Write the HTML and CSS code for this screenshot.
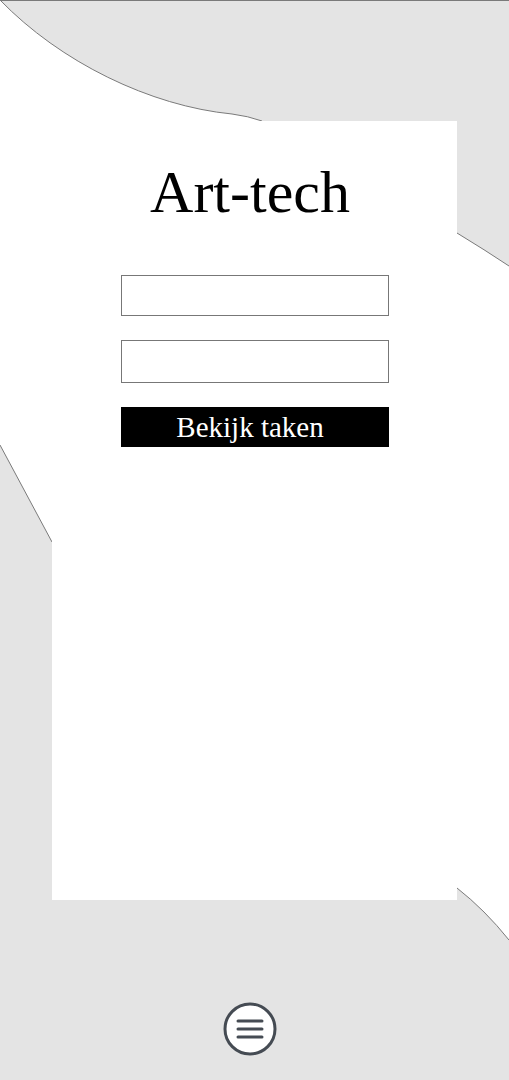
FILE: index.html
```html
<!DOCTYPE html>
<html lang="nl">
<head>
  <meta charset="UTF-8" />
  <meta name="viewport" content="width=device-width, initial-scale=1.0"/>
  <title>Art-tech</title>
  <link rel="stylesheet" href="styles.css">
</head>
<body>
  <svg class="backdrop" width="509" height="1080" viewBox="0 0 509 1080">
    <path class="blob" d="M0,0 C60,62 150,106 232,114 Q248,116 262,121 L300,135 L457,233 Q485,250 509,266 L509,940 Q485,910 457,888 L52,542 L0,445 Z"/>
    <path class="edge" d="M0,0 C60,62 150,106 232,114 Q248,116 262,121"/>
    <path class="edge" d="M457,233 Q485,250 509,266"/>
    <path class="edge" d="M509,940 Q485,910 457,888"/>
    <path class="edge" d="M52,542 L0,445"/>
    <line class="edge" x1="0" y1="0.5" x2="509" y2="0.5"/>
  </svg>

  <main class="page">
    <section class="card">
      <h1 class="title">Art-tech</h1>
      <form class="login">
        <input class="field" type="text" />
        <input class="field field-tall" type="password" />
        <button class="submit" type="button">Bekijk taken</button>
      </form>
    </section>
  </main>

  <nav class="menu">
    <button class="menu-btn" type="button" aria-label="Menu">
      <svg width="54" height="54" viewBox="0 0 54 54">
        <circle cx="27" cy="27" r="25" fill="#fff" stroke="#454b53" stroke-width="3"/>
        <line x1="15" y1="19" x2="39" y2="19" stroke="#454b53" stroke-width="3" stroke-linecap="round"/>
        <line x1="15" y1="27" x2="39" y2="27" stroke="#454b53" stroke-width="3" stroke-linecap="round"/>
        <line x1="15" y1="35" x2="39" y2="35" stroke="#454b53" stroke-width="3" stroke-linecap="round"/>
      </svg>
    </button>
  </nav>
</body>
</html>
```

FILE: styles.css
```css
* {
  box-sizing: border-box;
  margin: 0;
  padding: 0;
}

body {
  font-family: 'Liberation Serif', 'DejaVu Serif', serif;
  background: #e4e4e4;
  width: 509px;
  height: 1080px;
  position: relative;
  overflow: hidden;
}

.backdrop {
  position: absolute;
  top: 0;
  left: 0;
  z-index: 0;
}

.blob {
  fill: #fff;
}

.edge {
  fill: none;
  stroke: #7a7a7a;
  stroke-width: 1;
}

.page {
  position: relative;
  z-index: 1;
  padding-top: 121px;
  padding-left: 52px;
}

.card {
  width: 405px;
  height: 779px;
  background: #fff;
  padding-top: 36px;
  display: flex;
  flex-direction: column;
  align-items: center;
}

.title {
  font-weight: normal;
  font-size: 60px;
  line-height: 70px;
  margin-left: -9px;
  color: #000;
}

.login {
  margin-top: 48px;
  display: flex;
  flex-direction: column;
  gap: 24px;
  width: 268px;
}

.field {
  height: 41px;
  border: 1px solid #777;
  background: #fff;
  font-family: inherit;
  font-size: 18px;
  padding: 0 8px;
}

.field-tall {
  height: 43px;
}

.submit {
  height: 40px;
  background: #000;
  color: #fff;
  border: none;
  font-family: inherit;
  font-size: 29px;
  line-height: 40px;
  padding-right: 9px;
}

.menu {
  position: relative;
  z-index: 1;
  display: flex;
  justify-content: center;
  padding-top: 102px;
  padding-right: 9px;
}

.menu-btn {
  background: none;
  border: none;
  width: 54px;
  height: 54px;
  display: block;
}

.menu-btn svg {
  display: block;
}
```
